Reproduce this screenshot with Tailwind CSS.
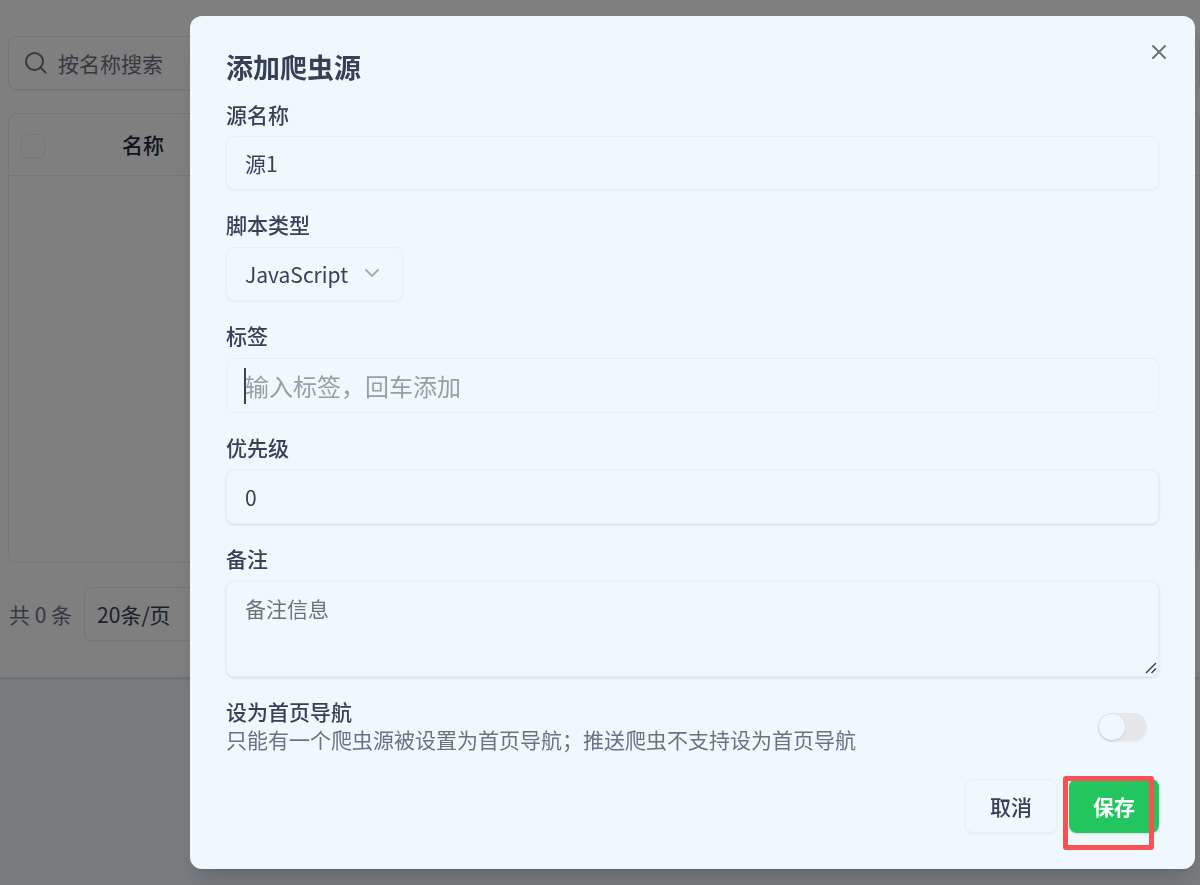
<!DOCTYPE html>
<html lang="zh-CN">
<head>
<meta charset="utf-8">
<meta name="viewport" content="width=device-width, initial-scale=1">
<title>添加爬虫源</title>
<script src="https://cdn.jsdelivr.net/npm/@tailwindcss/browser@4"></script>
</head>
<body class="min-h-screen bg-[#f0f8ff] font-['Noto_Sans_CJK_SC',sans-serif] text-[21px] leading-[30px] text-gray-700">

<!-- Source list behind the dialog -->
<main class="border-b border-gray-200 bg-white pt-9 pb-9 pl-2 shadow-sm">
  <label class="flex h-[54px] items-center gap-[10px] rounded-lg border border-[#e8eaed] px-[15px] text-gray-500 shadow-xs">
    <svg class="size-6 shrink-0" viewBox="0 0 24 24" fill="none" stroke="currentColor" stroke-width="2" stroke-linecap="round" aria-hidden="true"><circle cx="10.500" cy="10.500" r="8.500"/><path d="M17 17l4.500 4.500"/></svg>
    <input type="search" placeholder="按名称搜索" aria-label="按名称搜索" class="min-w-0 flex-1 bg-transparent outline-none placeholder:text-gray-500">
  </label>
  <div class="mt-[23px] h-[450px] rounded-lg border border-[#e8eaed]">
    <table class="w-full text-left">
      <thead>
        <tr class="h-[61px] border-b border-[#e8eaed]">
          <th class="w-[113px] pt-1 pl-3"><input type="checkbox" aria-label="全选" class="block size-6 appearance-none rounded-md border border-[#eceef0] shadow-xs"></th>
          <th class="font-medium text-gray-800">名称</th>
        </tr>
      </thead>
    </table>
  </div>
  <div class="mt-6 flex items-center gap-3 pl-px">
    <span class="text-gray-500">共 0 条</span>
    <select aria-label="每页条数" class="h-[54px] w-40 appearance-none rounded-lg border border-[#e8eaed] px-3 text-gray-700 shadow-xs"><option>20条/页</option></select>
  </div>
</main>

<div class="fixed inset-0 flex items-start overflow-auto bg-black/50 pt-4 pr-[5px] pl-[190px]">
  <form role="dialog" aria-modal="true" aria-labelledby="dialog-title" class="relative flex-1 rounded-xl bg-[#f0f8ff] px-9 pt-9 pb-9 shadow-xl">
    <button type="button" aria-label="关闭" class="absolute top-7 right-7 text-gray-500">
      <svg class="size-4" viewBox="0 0 16 16" fill="none" stroke="currentColor" stroke-width="2" stroke-linecap="round" aria-hidden="true"><path d="M2 2l12 12M14 2L2 14"/></svg>
    </button>
    <h2 id="dialog-title" class="mb-[18px] text-[27px] leading-[30px] font-bold">添加爬虫源</h2>

    <div class="flex flex-col gap-5">
      <div class="flex flex-col items-start gap-2">
        <label for="name" class="leading-7 font-medium">源名称</label>
        <input id="name" type="text" value="源1" class="h-[54px] w-full rounded-lg border border-[#e8eff6] px-[18px] shadow-xs outline-none">
      </div>

      <div class="flex flex-col items-start gap-[9px]">
        <label for="type" class="leading-7 font-medium">脚本类型</label>
        <div class="relative">
          <select id="type" class="h-[54px] w-[177px] appearance-none rounded-lg border border-[#e8eff6] px-[18px] shadow-xs outline-none"><option>JavaScript</option><option>Python</option></select>
          <svg class="pointer-events-none absolute top-[18px] right-[23px] size-4" viewBox="0 0 16 16" fill="none" stroke="#a6adb6" stroke-width="2" stroke-linecap="round" stroke-linejoin="round" aria-hidden="true"><path d="M2 5l6 6 6-6"/></svg>
        </div>
      </div>

      <div class="flex flex-col items-start gap-[9px]">
        <label for="tags" class="leading-7 font-medium">标签</label>
        <div class="relative w-full">
          <input id="tags" type="text" placeholder="输入标签，回车添加" class="block h-[55px] w-full rounded-lg border border-[#e8eff6] px-[18px] text-2xl outline-none placeholder:text-[#979ea6]">
          <span class="absolute top-[10px] left-[18px] h-9 w-0.5 bg-gray-700"></span>
        </div>
      </div>

      <div class="flex flex-col items-start gap-[9px]">
        <label for="priority" class="leading-7 font-medium">优先级</label>
        <input id="priority" type="text" inputmode="numeric" value="0" class="h-[54px] w-full rounded-lg border border-[#e8eff6] px-[18px] shadow-sm outline-none">
      </div>

      <div class="flex flex-col items-start gap-[9px]">
        <label for="note" class="leading-7 font-medium">备注</label>
        <div class="relative w-full">
          <textarea id="note" placeholder="备注信息" class="block h-24 w-full resize-none rounded-lg border border-[#e8eff6] px-[18px] py-[11px] shadow-sm outline-none placeholder:text-gray-500"></textarea>
          <svg class="pointer-events-none absolute right-0.5 bottom-[3px] size-3" viewBox="0 0 12 12" fill="none" stroke="#3f444a" stroke-width="1.500" aria-hidden="true"><path d="M1 11L11 1M6.500 11L11 6.500"/></svg>
        </div>
      </div>

      <div class="flex items-center justify-between pr-3">
        <div class="pb-1 leading-7">
          <label for="home" class="block font-medium">设为首页导航</label>
          <p id="home-hint" class="text-gray-500">只能有一个爬虫源被设置为首页导航；推送爬虫不支持设为首页导航</p>
        </div>
        <input id="home" type="checkbox" role="switch" aria-describedby="home-hint" class="h-7 w-[49px] appearance-none rounded-full bg-gray-200 p-px shadow-xs before:block before:size-[26px] before:rounded-full before:bg-[#f0f8ff] before:shadow-sm checked:bg-green-500 checked:before:translate-x-5">
      </div>
    </div>

    <div class="mt-[22px] flex justify-end gap-3">
      <button type="button" class="h-[54px] rounded-lg border border-[#e8eff6] px-6 font-medium shadow-xs">取消</button>
      <div class="relative">
        <button type="submit" class="h-[54px] rounded-lg bg-[#22c55e] px-6 font-bold text-white shadow-sm">保存</button>
        <span class="pointer-events-none absolute -top-[3px] -left-[6px] h-[74px] w-[91px] rounded-[3px] border-[5px] border-[#fa5252]"></span>
      </div>
    </div>
  </form>
</div>
</body>
</html>
